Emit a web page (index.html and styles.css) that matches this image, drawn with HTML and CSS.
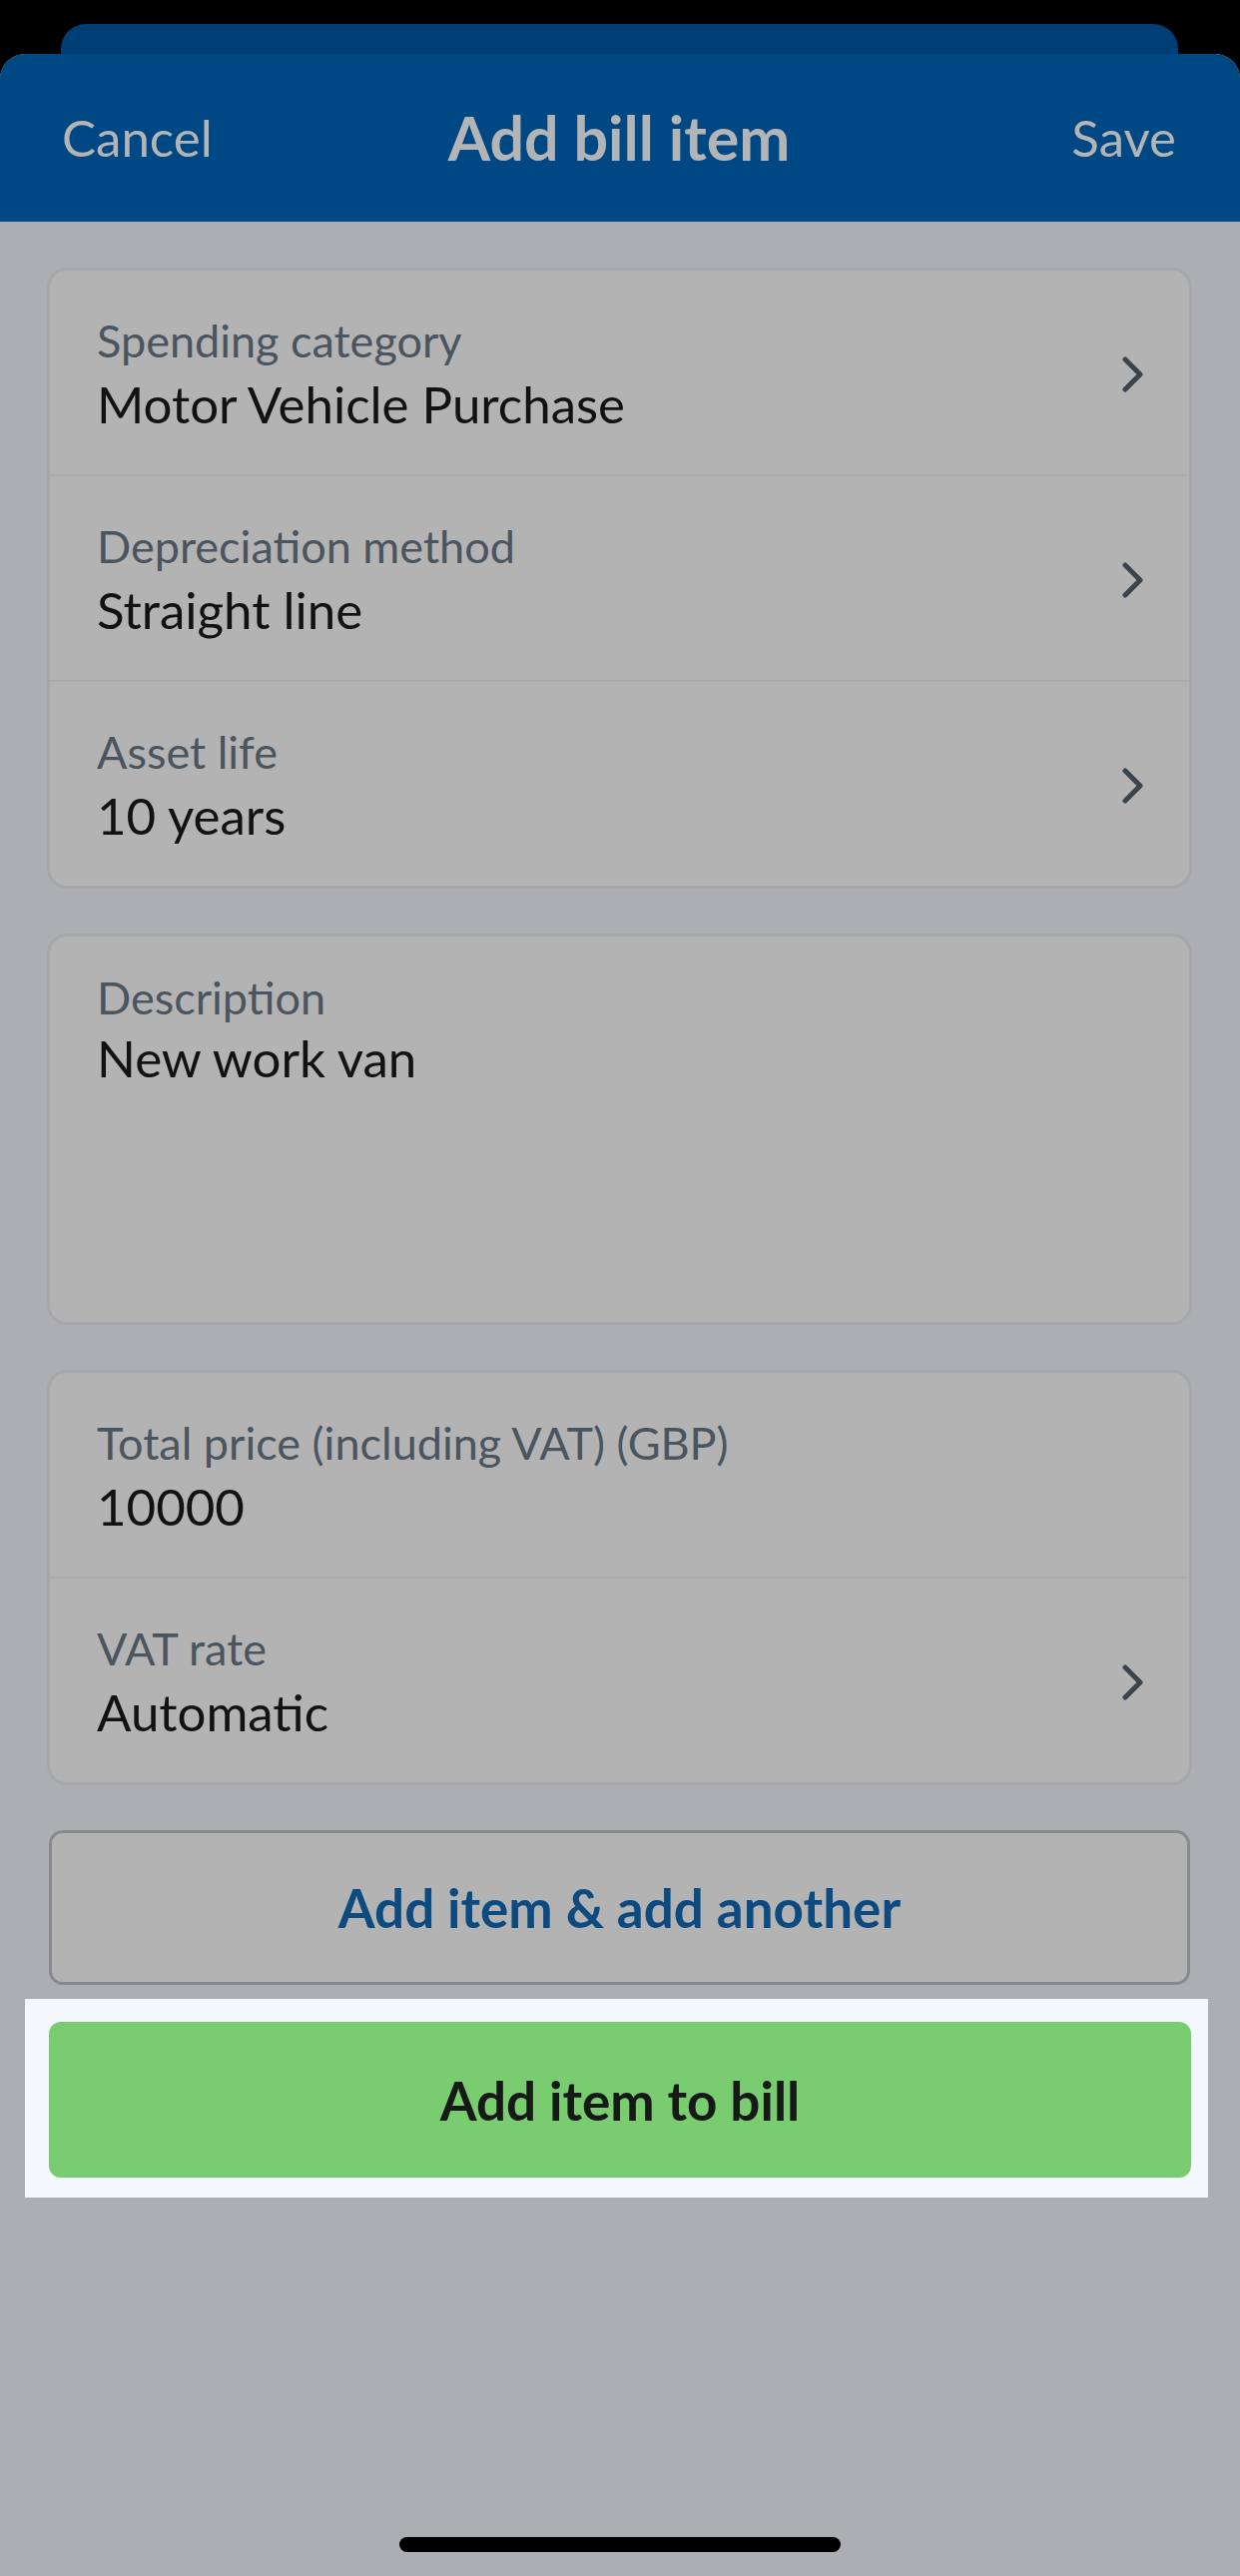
FILE: index.html
```html
<!DOCTYPE html>
<html lang="en">
<head>
<meta charset="utf-8">
<title>Add bill item</title>
<link rel="stylesheet" href="styles.css">
</head>
<body>
<div class="screen">
  <div class="top-strip">
    <div class="back-card"></div>
  </div>
  <div class="sheet">
    <header class="navbar">
      <span class="nav-btn nav-left">Cancel</span>
      <h1 class="nav-title">Add bill item</h1>
      <span class="nav-btn nav-right">Save</span>
    </header>
    <main class="content">
      <section class="card">
        <div class="row">
          <div class="field">
            <span class="label">Spending category</span>
            <span class="value">Motor Vehicle Purchase</span>
          </div>
          <svg class="chev" viewBox="0 0 24 36" aria-hidden="true"><path d="M4 3 L19 18 L4 33"/></svg>
        </div>
        <div class="row">
          <div class="field">
            <span class="label">Depreciation method</span>
            <span class="value">Straight line</span>
          </div>
          <svg class="chev" viewBox="0 0 24 36" aria-hidden="true"><path d="M4 3 L19 18 L4 33"/></svg>
        </div>
        <div class="row">
          <div class="field">
            <span class="label">Asset life</span>
            <span class="value">10 years</span>
          </div>
          <svg class="chev" viewBox="0 0 24 36" aria-hidden="true"><path d="M4 3 L19 18 L4 33"/></svg>
        </div>
      </section>

      <section class="card desc">
        <span class="label">Description</span>
        <span class="value">New work van</span>
      </section>

      <section class="card">
        <div class="row">
          <div class="field">
            <span class="label">Total price (including VAT) (GBP)</span>
            <span class="value">10000</span>
          </div>
        </div>
        <div class="row">
          <div class="field">
            <span class="label">VAT rate</span>
            <span class="value">Automatic</span>
          </div>
          <svg class="chev" viewBox="0 0 24 36" aria-hidden="true"><path d="M4 3 L19 18 L4 33"/></svg>
        </div>
      </section>

      <button class="btn-outline" type="button">Add item &amp; add another</button>

      <div class="spotlight">
        <button class="btn-primary" type="button">Add item to bill</button>
      </div>
    </main>
    <div class="home-indicator"></div>
  </div>
</div>
</body>
</html>
```

FILE: styles.css
```css
* { box-sizing: border-box; }

html, body {
  margin: 0;
  padding: 0;
  background: #000;
}

body {
  font-family: "Lato", "Liberation Sans", sans-serif;
  width: 1242px;
  height: 2580px;
  overflow: hidden;
}

.screen {
  width: 1242px;
  height: 2580px;
  display: flex;
  flex-direction: column;
}

.top-strip {
  height: 54px;
  padding: 24px 62px 0 61px;
  background: #000;
}

.back-card {
  height: 30px;
  background: #003f75;
  border-radius: 25px 25px 0 0;
}

.sheet {
  flex: 1;
  display: flex;
  flex-direction: column;
  background: #adaeb2;
  border-radius: 25px 25px 0 0;
  overflow: hidden;
}

.navbar {
  height: 168px;
  background: #004884;
  display: grid;
  grid-template-columns: 1fr auto 1fr;
  align-items: center;
  padding: 0 64px 0 62px;
}

.nav-btn {
  font-size: 51px;
  color: #b3b4b6;
  line-height: 1.2;
}

.nav-left { justify-self: start; }
.nav-right { justify-self: end; }

.nav-title {
  margin: 0;
  font-size: 61px;
  font-weight: 700;
  color: #b3b4b6;
  line-height: 1.2;
}

.content {
  display: flex;
  flex-direction: column;
  padding: 46px 48px 0 47px;
}

.card {
  background: #b3b3b3;
  border: 3px solid #a6a7aa;
  border-radius: 20px;
  margin-bottom: 45px;
}

.row {
  height: 204px;
  display: flex;
  align-items: center;
  justify-content: space-between;
  padding: 4px 44px 0 47px;
}

.row + .row {
  border-top: 2px solid #aaabae;
  height: 206px;
}

.field {
  display: flex;
  flex-direction: column;
  gap: 6px;
}

.label {
  font-size: 45px;
  line-height: 1.2;
  color: #4a5560;
}

.value {
  font-size: 51px;
  line-height: 1.2;
  color: #121212;
}

.chev {
  width: 24px;
  height: 36px;
  fill: none;
  stroke: #3a444d;
  stroke-width: 5;
  stroke-linecap: round;
  stroke-linejoin: round;
}

.desc {
  height: 392px;
  display: flex;
  flex-direction: column;
  gap: 3px;
  padding: 34px 47px;
}

.btn-outline {
  height: 155px;
  margin: 0 2px;
  background: #b3b3b3;
  border: 3px solid #88898d;
  border-radius: 14px;
  font-family: inherit;
  font-size: 53px;
  font-weight: 700;
  color: #0c4a80;
}

.spotlight {
  margin: 14px -16px 0 -22px;
  background: #f4f7fc;
  padding: 23px 17px 20px 24px;
}

.btn-primary {
  display: block;
  width: 100%;
  height: 156px;
  background: #79cc6f;
  border: none;
  border-radius: 12px;
  font-family: inherit;
  font-size: 53px;
  font-weight: 700;
  color: #161a17;
}

.home-indicator {
  margin: auto auto 24px;
  width: 442px;
  height: 15px;
  border-radius: 8px;
  background: #000;
}
```
